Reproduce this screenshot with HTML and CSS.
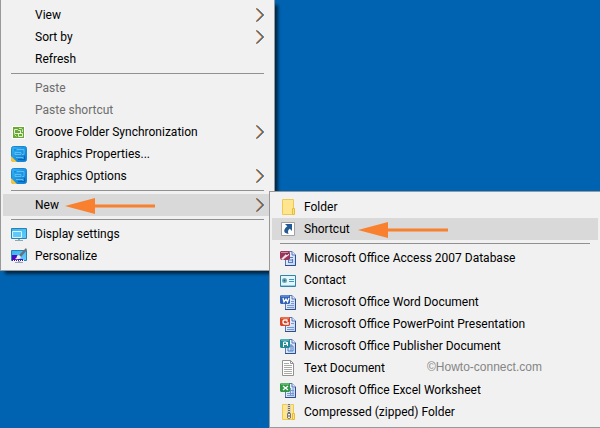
FILE: index.html
```html
<!DOCTYPE html>
<html lang="en">
<head>
    <meta charset="utf-8" />
    <title>Desktop</title>
    <link rel="stylesheet" href="styles.css">
</head>
<body>

    <!-- Shared shapes -->
    <svg class="defs" aria-hidden="true">
        <defs>
            <linearGradient id="blue" x1="0" y1="0" x2="1" y2="1">
                <stop offset="0" stop-color="#33b4f5" />
                <stop offset="1" stop-color="#0876ce" />
            </linearGradient>
            <linearGradient id="screen" x1="0" y1="0" x2="1" y2="1">
                <stop offset="0" stop-color="#3bb3ee" />
                <stop offset="1" stop-color="#63cdfb" />
            </linearGradient>
            <linearGradient id="paper" x1="0" y1="0" x2="1" y2="1">
                <stop offset="0" stop-color="#ffffff" />
                <stop offset="1" stop-color="#b9d0f5" />
            </linearGradient>
        </defs>
        <symbol id="chevron" viewBox="0 0 8 14">
            <path d="M0 .5L6.500 7L0 13.500" fill="none" stroke="#d17a25" stroke-width="1.200" />
            <path d="M1.400 .5L7.900 7L1.400 13.500" fill="none" stroke="#3c97e6" />
            <path d="M.7 .5L7.200 7L.7 13.500" fill="none" stroke="#3b2a25" stroke-width=".6" />
        </symbol>
        <symbol id="arrow" viewBox="0 0 90 16">
            <path d="M0 8L30 0V6.500H90V9.500H30V16Z" fill="#f8802f" />
        </symbol>
        <symbol id="graphics" viewBox="0 0 16 16">
            <rect x=".5" y=".5" width="15" height="15" rx="2" fill="url(#blue)" stroke="#1686d5" />
            <path d="M0 10L6 16H2Q0 16 0 14Z" fill="#f6c43a" />
            <path d="M6 3.500H13V8.500H11M4 6.500H10V8.500H4ZM5 11.500H12V13" fill="none" stroke="#6cc6f6" stroke-width=".8" />
            <path d="M4 4.500V3M13.500 10V13.500H7" fill="none" stroke="#075aa8" stroke-width=".8" />
        </symbol>
        <symbol id="office-page" viewBox="0 0 16 16">
            <path d="M5.500 1.500H12L15.500 5V15.500H5.500Z" fill="url(#paper)" stroke="#5875b4" />
            <path d="M12 1.500V5H15.500" fill="#e3edff" stroke="#5875b4" />
            <path d="M15.500 5V15.500H5" fill="none" stroke="#304d8c" />
        </symbol>
    </svg>

    <!-- Desktop context menu -->
    <ul class="menu main-menu">
        <li><button class="item"><span class="icon"></span>View<svg class="chevron"><use href="#chevron" /></svg></button></li>
        <li><button class="item"><span class="icon"></span>Sort by<svg class="chevron"><use href="#chevron" /></svg></button></li>
        <li><button class="item"><span class="icon"></span>Refresh</button></li>
        <li class="separator"></li>
        <li><button class="item" disabled><span class="icon"></span>Paste</button></li>
        <li><button class="item" disabled><span class="icon"></span>Paste shortcut</button></li>
        <li>
            <button class="item">
                <svg class="icon" viewBox="0 0 16 16">
                    <path d="M1 2H14V15H1Z" fill="#fff" />
                    <path d="M2 3H13V14H2Z" fill="#69aa35" />
                    <path d="M3.500 5.500H6.500L7.500 6.500H9.500V9.500H3.500ZM7.500 9.500H11.500V12.500H7.500Z" fill="#69aa35" stroke="#fff" stroke-width=".8" />
                    <path d="M8 4.500H10.500L11.500 5.500V8M3.500 10.500L5.500 12.500" fill="none" stroke="#e6f4dc" stroke-width=".8" />
                </svg>
                Groove Folder Synchronization
                <svg class="chevron"><use href="#chevron" /></svg>
            </button>
        </li>
        <li><button class="item"><svg class="icon"><use href="#graphics" /></svg>Graphics Properties...</button></li>
        <li><button class="item"><svg class="icon"><use href="#graphics" /></svg>Graphics Options<svg class="chevron"><use href="#chevron" /></svg></button></li>
        <li class="separator"></li>
        <li>
            <button class="item selected">
                <span class="icon"></span>New
                <svg class="arrow arrow-new"><use href="#arrow" /></svg>
                <svg class="chevron"><use href="#chevron" /></svg>
            </button>
        </li>
        <li class="separator"></li>
        <li>
            <button class="item">
                <svg class="icon" viewBox="0 0 16 16">
                    <path d="M.5 2.500H15.500V12.500H.5Z" fill="url(#screen)" stroke="#2583b4" />
                    <path d="M1.500 5.500H10.500V11.500H1.500Z" fill="#61c8fa" stroke="#d6f3ff" />
                    <path d="M7 13H9V14H12V15H4V14H7Z" fill="#94a6b0" />
                </svg>
                Display settings
            </button>
        </li>
        <li>
            <button class="item">
                <svg class="icon" viewBox="0 0 16 16">
                    <path d="M.5 2.500H15.500V12.500H.5Z" fill="url(#screen)" stroke="#2583b4" />
                    <path d="M1 7H6L8 11H12V13H1Z" fill="#4b0cc0" />
                    <path d="M2 12.500H14" stroke="#fff" stroke-dasharray="1 1" />
                    <path d="M15 0L16 2L10 9L8 7Z" fill="#66737c" />
                    <path d="M8 7L10 9Q9 12 4 11Q6 10 6 8Z" fill="#eef1f3" />
                    <path d="M7 13H9V14H12V15H4V14H7Z" fill="#94a6b0" />
                </svg>
                Personalize
            </button>
        </li>
    </ul>

    <!-- "New" submenu -->
    <ul class="menu sub-menu">
        <li>
            <button class="item">
                <svg class="icon" viewBox="0 0 16 16">
                    <path d="M2.500 .5H13.500V15.500H2.500Z" fill="#ffe58f" stroke="#edca4e" />
                    <path d="M12.500 9.500H14.500V15.500H12.500Z" fill="#ffe17c" stroke="#e6bd37" />
                </svg>
                Folder
            </button>
        </li>
        <li>
            <button class="item selected">
                <svg class="icon" viewBox="0 0 16 16">
                    <path d="M1.500 1.500H14.500V14.500H1.500Z" fill="#fff" stroke="#a3a3a3" />
                    <path d="M5 3H12V10L9.800 7.800Q7 9.500 8.500 13Q3 12 4.500 8.500Q5.200 6.700 7.300 5.300Z" fill="#245a91" />
                </svg>
                Shortcut
                <svg class="arrow arrow-shortcut"><use href="#arrow" /></svg>
            </button>
        </li>
        <li class="separator"></li>
        <li>
            <button class="item">
                <svg class="icon" viewBox="0 0 16 16">
                    <use href="#office-page" />
                    <path d="M8 7.500H13M8 12.500H13M8.500 7V13M12.500 9V13M8 10H13" fill="none" stroke="#537ac2" />
                    <path d="M1 1H9L10 3V9L8 10H1L0 8V2Z" fill="#98365a" />
                    <path d="M1 9L6 4H9V5L5 8L3 10Z" fill="#f4dfe6" />
                    <circle cx="7" cy="4" r="1" fill="#742746" />
                    <path d="M1 2.500H8" stroke="#cf8aa2" />
                </svg>
                Microsoft Office Access 2007 Database
            </button>
        </li>
        <li>
            <button class="item">
                <svg class="icon" viewBox="0 0 16 16">
                    <path d="M.5 3.500H15.500V14.500H.5Z" fill="#e5f5fb" stroke="#3184a8" />
                    <path d="M1 13.500H15" stroke="#91cee4" />
                    <circle cx="4.500" cy="8.500" r="2.500" fill="#67a8bd" />
                    <circle cx="4.500" cy="8.500" r="1" fill="#3c6850" />
                    <path d="M9 7.500H14M9 9.500H14" stroke="#369ac3" />
                </svg>
                Contact
            </button>
        </li>
        <li>
            <button class="item">
                <svg class="icon" viewBox="0 0 16 16">
                    <use href="#office-page" />
                    <path d="M11 7.500H14M11 9.500H14M7 11.500H14M7 13.500H14" stroke="#7898d0" />
                    <path d="M1 1H9L10 2V9L9 10H1L0 9V2Z" fill="#3162b8" />
                    <path d="M1 2H9" stroke="#83aceb" />
                    <path d="M3 4L4 8L6 5L7.500 8L9 4" fill="none" stroke="#fff" stroke-width="1.300" />
                </svg>
                Microsoft Office Word Document
            </button>
        </li>
        <li>
            <button class="item">
                <svg class="icon" viewBox="0 0 16 16">
                    <use href="#office-page" />
                    <path d="M11 7.500H14M7 11.500H14M7 13.500H14" stroke="#7898d0" />
                    <path d="M1 1H9L10 2V9L9 10H1L0 9V2Z" fill="#d74526" />
                    <path d="M1 2H9" stroke="#f69c78" />
                    <path d="M7.500 4H4.500Q3 4 3 6T5 8H8V6" fill="none" stroke="#fff" stroke-width="1.300" />
                    <path d="M6 5H8" stroke="#fff" />
                </svg>
                Microsoft Office PowerPoint Presentation
            </button>
        </li>
        <li>
            <button class="item">
                <svg class="icon" viewBox="0 0 16 16">
                    <use href="#office-page" />
                    <path d="M8 8H13V13H8ZM11 6V13" fill="#d9e5fa" stroke="#517ec5" />
                    <path d="M1 1H9L10 2V9L9 10H1L0 9V2Z" fill="#218b96" />
                    <path d="M1 2H9" stroke="#7ed1d5" />
                    <path d="M3.500 9V4H6.500V6.500H4M7.500 4V8" fill="none" stroke="#fff" />
                </svg>
                Microsoft Office Publisher Document
            </button>
        </li>
        <li>
            <button class="item">
                <svg class="icon" viewBox="0 0 16 16">
                    <path d="M2.500 .5H10.500L13.500 3.500V15.500H2.500Z" fill="#fff" stroke="#929292" />
                    <path d="M10.500 .5V3.500H13.500" fill="none" stroke="#929292" />
                    <path d="M4 3.500H9M4 5.500H12M4 7.500H12M4 9.500H12M4 11.500H12M4 13.500H12" stroke="#aaa" />
                </svg>
                Text Document
            </button>
        </li>
        <li>
            <button class="item">
                <svg class="icon" viewBox="0 0 16 16">
                    <use href="#office-page" />
                    <path d="M10.500 6V14M13 6V14M7 11.500H14M7 13.500H14M10 8.500H14" stroke="#7898d0" />
                    <path d="M1 1H9L10 2V9L9 10H1L0 9V2Z" fill="#2f9844" />
                    <path d="M1 2H9" stroke="#8bd48e" />
                    <path d="M3 4L8 8M8 4L3 8" stroke="#fff" stroke-width="1.400" />
                </svg>
                Microsoft Office Excel Worksheet
            </button>
        </li>
        <li>
            <button class="item">
                <svg class="icon" viewBox="0 0 16 16">
                    <path d="M2.500 .5H13.500V15.500H2.500Z" fill="#ffe58f" stroke="#edca4e" />
                    <path d="M12.500 9.500H14.500V15.500H12.500Z" fill="#ffe17c" stroke="#e6bd37" />
                    <path d="M7 0H11V10H7Z" fill="#ddd6bd" />
                    <path d="M9 0V9" stroke="#6f6f6f" stroke-width="2" stroke-dasharray="1 1" />
                    <path d="M7.500 9.500H10.500V14L9 15L7.500 14Z" fill="#eee" stroke="#777" />
                    <path d="M9 11V13" stroke="#555" />
                </svg>
                Compressed (zipped) Folder
            </button>
        </li>
    </ul>

    <span class="watermark">©Howto-connect.com</span>

</body>
</html>
```

FILE: styles.css
```css
body {
    background-color: #0063b1;
    font-family: 'Segoe UI', Roboto, sans-serif;
    font-size: 12px;
    margin: 0;
    min-height: 100vh;
    overflow: hidden;
}

.defs {
    position: absolute;
    width: 0;
    height: 0;
}

/* Menus float over the desktop */
.menu {
    position: absolute;
    box-sizing: border-box;
    list-style: none;
    margin: 0;
    background-color: #f1f1f1;
    border: 1px solid #999999;
}

.main-menu {
    top: 0;
    left: 0;
    width: 275px;
    padding: 4px 2px 3px;
    border-top: none;
    box-shadow: 4px 4px 3px -1px rgba(0, 0, 0, 0.6);
}

.sub-menu {
    top: 191px;
    left: 269px;
    right: -1px;
    padding: 4px 2px;
}

.item {
    position: relative;
    display: flex;
    align-items: center;
    gap: 8px;
    width: 100%;
    height: 22px;
    padding: 0 8px;
    border: none;
    background: none;
    color: #000000;
    font: inherit;
    line-height: 22px;
    white-space: nowrap;
    text-align: left;
}

    .item:disabled {
        color: #6d6d6d;
    }

    .item.selected {
        background-color: #d9d9d9;
    }

.icon {
    width: 16px;
    height: 16px;
    flex-shrink: 0;
}

.chevron {
    width: 8px;
    height: 14px;
    margin-left: auto;
}

.separator {
    height: 1px;
    margin: 3px 8px;
    background-color: #919191;
}

/* Orange pointers drawn on top of the rows */
.arrow {
    position: absolute;
    top: 4px;
    width: 90px;
    height: 16px;
}

.arrow-new {
    left: 62px;
}

.arrow-shortcut {
    left: 86px;
}

.watermark {
    position: absolute;
    top: 358px;
    left: 427px;
    color: #858585;
    font-family: 'Liberation Sans', Arial, sans-serif;
    font-size: 12px;
    line-height: 18px;
}
```
